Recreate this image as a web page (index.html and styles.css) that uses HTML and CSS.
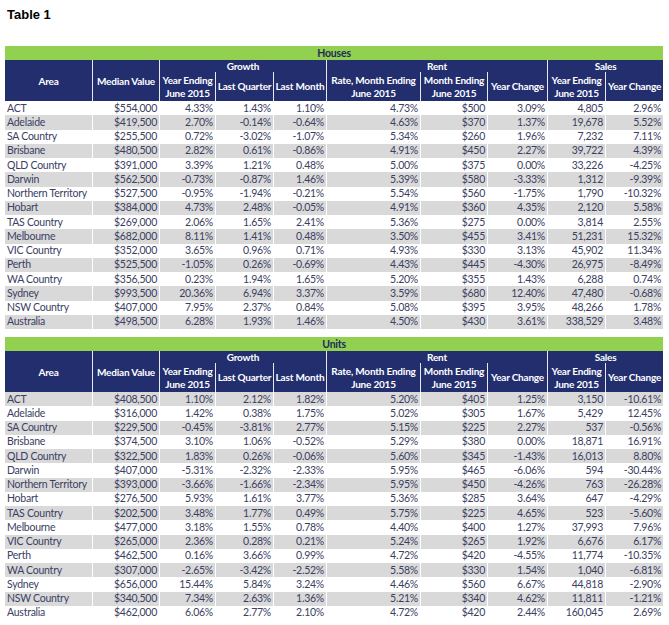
FILE: index.html
```html
<!DOCTYPE html>
<html>
<head>
<meta charset="utf-8">
<link rel="stylesheet" href="styles.css">
</head>
<body>
<h1 class="title">Table 1</h1>

<table class="grid">
  <colgroup>
    <col class="c-area"><col class="c-median"><col class="c-ye"><col class="c-lq"><col class="c-lm"><col class="c-rate"><col class="c-me"><col class="c-yc"><col class="c-sye"><col class="c-syc">
  </colgroup>
  <thead>
    <tr class="band"><th colspan="10">Houses</th></tr>
    <tr class="grp">
      <th rowspan="2" class="first">Area</th>
      <th rowspan="2">Median Value</th>
      <th colspan="3">Growth</th>
      <th colspan="3">Rent</th>
      <th colspan="2">Sales</th>
    </tr>
    <tr class="sub">
      <th>Year Ending<br>June 2015</th>
      <th>Last Quarter</th>
      <th>Last Month</th>
      <th>Rate, Month Ending<br>June 2015</th>
      <th>Month Ending<br>June 2015</th>
      <th>Year Change</th>
      <th>Year Ending<br>June 2015</th>
      <th>Year Change</th>
    </tr>
  </thead>
  <tbody>
    <tr><td>ACT</td><td>$554,000</td><td>4.33%</td><td>1.43%</td><td>1.10%</td><td>4.73%</td><td>$500</td><td>3.09%</td><td>4,805</td><td>2.96%</td></tr>
    <tr class="g"><td>Adelaide</td><td>$419,500</td><td>2.70%</td><td>-0.14%</td><td>-0.64%</td><td>4.63%</td><td>$370</td><td>1.37%</td><td>19,678</td><td>5.52%</td></tr>
    <tr><td>SA Country</td><td>$255,500</td><td>0.72%</td><td>-3.02%</td><td>-1.07%</td><td>5.34%</td><td>$260</td><td>1.96%</td><td>7,232</td><td>7.11%</td></tr>
    <tr class="g"><td>Brisbane</td><td>$480,500</td><td>2.82%</td><td>0.61%</td><td>-0.86%</td><td>4.91%</td><td>$450</td><td>2.27%</td><td>39,722</td><td>4.39%</td></tr>
    <tr><td>QLD Country</td><td>$391,000</td><td>3.39%</td><td>1.21%</td><td>0.48%</td><td>5.00%</td><td>$375</td><td>0.00%</td><td>33,226</td><td>-4.25%</td></tr>
    <tr class="g"><td>Darwin</td><td>$562,500</td><td>-0.73%</td><td>-0.87%</td><td>1.46%</td><td>5.39%</td><td>$580</td><td>-3.33%</td><td>1,312</td><td>-9.39%</td></tr>
    <tr><td>Northern Territory</td><td>$527,500</td><td>-0.95%</td><td>-1.94%</td><td>-0.21%</td><td>5.54%</td><td>$560</td><td>-1.75%</td><td>1,790</td><td>-10.32%</td></tr>
    <tr class="g"><td>Hobart</td><td>$384,000</td><td>4.73%</td><td>2.48%</td><td>-0.05%</td><td>4.91%</td><td>$360</td><td>4.35%</td><td>2,120</td><td>5.58%</td></tr>
    <tr><td>TAS Country</td><td>$269,000</td><td>2.06%</td><td>1.65%</td><td>2.41%</td><td>5.36%</td><td>$275</td><td>0.00%</td><td>3,814</td><td>2.55%</td></tr>
    <tr class="g"><td>Melbourne</td><td>$682,000</td><td>8.11%</td><td>1.41%</td><td>0.48%</td><td>3.50%</td><td>$455</td><td>3.41%</td><td>51,231</td><td>15.32%</td></tr>
    <tr><td>VIC Country</td><td>$352,000</td><td>3.65%</td><td>0.96%</td><td>0.71%</td><td>4.93%</td><td>$330</td><td>3.13%</td><td>45,902</td><td>11.34%</td></tr>
    <tr class="g"><td>Perth</td><td>$525,500</td><td>-1.05%</td><td>0.26%</td><td>-0.69%</td><td>4.43%</td><td>$445</td><td>-4.30%</td><td>26,975</td><td>-8.49%</td></tr>
    <tr><td>WA Country</td><td>$356,500</td><td>0.23%</td><td>1.94%</td><td>1.65%</td><td>5.20%</td><td>$355</td><td>1.43%</td><td>6,288</td><td>0.74%</td></tr>
    <tr class="g"><td>Sydney</td><td>$993,500</td><td>20.36%</td><td>6.94%</td><td>3.37%</td><td>3.59%</td><td>$680</td><td>12.40%</td><td>47,480</td><td>-0.68%</td></tr>
    <tr><td>NSW Country</td><td>$407,000</td><td>7.95%</td><td>2.37%</td><td>0.84%</td><td>5.08%</td><td>$395</td><td>3.95%</td><td>48,266</td><td>1.78%</td></tr>
    <tr class="g"><td>Australia</td><td>$498,500</td><td>6.28%</td><td>1.93%</td><td>1.46%</td><td>4.50%</td><td>$430</td><td>3.61%</td><td>338,529</td><td>3.48%</td></tr>
  </tbody>
</table>

<table class="grid second">
  <colgroup>
    <col class="c-area"><col class="c-median"><col class="c-ye"><col class="c-lq"><col class="c-lm"><col class="c-rate"><col class="c-me"><col class="c-yc"><col class="c-sye"><col class="c-syc">
  </colgroup>
  <thead>
    <tr class="band"><th colspan="10">Units</th></tr>
    <tr class="grp">
      <th rowspan="2" class="first">Area</th>
      <th rowspan="2">Median Value</th>
      <th colspan="3">Growth</th>
      <th colspan="3">Rent</th>
      <th colspan="2">Sales</th>
    </tr>
    <tr class="sub">
      <th>Year Ending<br>June 2015</th>
      <th>Last Quarter</th>
      <th>Last Month</th>
      <th>Rate, Month Ending<br>June 2015</th>
      <th>Month Ending<br>June 2015</th>
      <th>Year Change</th>
      <th>Year Ending<br>June 2015</th>
      <th>Year Change</th>
    </tr>
  </thead>
  <tbody>
    <tr class="g"><td>ACT</td><td>$408,500</td><td>1.10%</td><td>2.12%</td><td>1.82%</td><td>5.20%</td><td>$405</td><td>1.25%</td><td>3,150</td><td>-10.61%</td></tr>
    <tr><td>Adelaide</td><td>$316,000</td><td>1.42%</td><td>0.38%</td><td>1.75%</td><td>5.02%</td><td>$305</td><td>1.67%</td><td>5,429</td><td>12.45%</td></tr>
    <tr class="g"><td>SA Country</td><td>$229,500</td><td>-0.45%</td><td>-3.81%</td><td>2.77%</td><td>5.15%</td><td>$225</td><td>2.27%</td><td>537</td><td>-0.56%</td></tr>
    <tr><td>Brisbane</td><td>$374,500</td><td>3.10%</td><td>1.06%</td><td>-0.52%</td><td>5.29%</td><td>$380</td><td>0.00%</td><td>18,871</td><td>16.91%</td></tr>
    <tr class="g"><td>QLD Country</td><td>$322,500</td><td>1.83%</td><td>0.26%</td><td>-0.06%</td><td>5.60%</td><td>$345</td><td>-1.43%</td><td>16,013</td><td>8.80%</td></tr>
    <tr><td>Darwin</td><td>$407,000</td><td>-5.31%</td><td>-2.32%</td><td>-2.33%</td><td>5.95%</td><td>$465</td><td>-6.06%</td><td>594</td><td>-30.44%</td></tr>
    <tr class="g"><td>Northern Territory</td><td>$393,000</td><td>-3.66%</td><td>-1.66%</td><td>-2.34%</td><td>5.95%</td><td>$450</td><td>-4.26%</td><td>763</td><td>-26.28%</td></tr>
    <tr><td>Hobart</td><td>$276,500</td><td>5.93%</td><td>1.61%</td><td>3.77%</td><td>5.36%</td><td>$285</td><td>3.64%</td><td>647</td><td>-4.29%</td></tr>
    <tr class="g"><td>TAS Country</td><td>$202,500</td><td>3.48%</td><td>1.77%</td><td>0.49%</td><td>5.75%</td><td>$225</td><td>4.65%</td><td>523</td><td>-5.60%</td></tr>
    <tr><td>Melbourne</td><td>$477,000</td><td>3.18%</td><td>1.55%</td><td>0.78%</td><td>4.40%</td><td>$400</td><td>1.27%</td><td>37,993</td><td>7.96%</td></tr>
    <tr class="g"><td>VIC Country</td><td>$265,000</td><td>2.36%</td><td>0.28%</td><td>0.21%</td><td>5.24%</td><td>$265</td><td>1.92%</td><td>6,676</td><td>6.17%</td></tr>
    <tr><td>Perth</td><td>$462,500</td><td>0.16%</td><td>3.66%</td><td>0.99%</td><td>4.72%</td><td>$420</td><td>-4.55%</td><td>11,774</td><td>-10.35%</td></tr>
    <tr class="g"><td>WA Country</td><td>$307,000</td><td>-2.65%</td><td>-3.42%</td><td>-2.52%</td><td>5.58%</td><td>$330</td><td>1.54%</td><td>1,040</td><td>-6.81%</td></tr>
    <tr><td>Sydney</td><td>$656,000</td><td>15.44%</td><td>5.84%</td><td>3.24%</td><td>4.46%</td><td>$560</td><td>6.67%</td><td>44,818</td><td>-2.90%</td></tr>
    <tr class="g"><td>NSW Country</td><td>$340,500</td><td>7.34%</td><td>2.63%</td><td>1.36%</td><td>5.21%</td><td>$340</td><td>4.62%</td><td>11,811</td><td>-1.21%</td></tr>
    <tr><td>Australia</td><td>$462,000</td><td>6.06%</td><td>2.77%</td><td>2.10%</td><td>4.72%</td><td>$420</td><td>2.44%</td><td>160,045</td><td>2.69%</td></tr>
  </tbody>
</table>
</body>
</html>
```

FILE: styles.css
```css
html, body {
  margin: 0;
  padding: 0;
  background: #ffffff;
}

body {
  padding: 0 6px 0 5px;
}

.title {
  margin: 7px 0 24px 2px;
  font-family: "Liberation Sans", Arial, sans-serif;
  font-weight: bold;
  font-size: 13px;
  line-height: 15px;
  color: #000;
}

.grid {
  width: 658px;
  table-layout: fixed;
  border-collapse: separate;
  border-spacing: 0;
  font-family: Lato, "Open Sans", sans-serif;
  font-size: 10.5px;
  letter-spacing: -0.25px;
  color: #3a4062;
}

.second {
  margin-top: 8px;
}

.c-area { width: 87px; }
.c-median { width: 67px; }
.c-ye { width: 56px; }
.c-lq { width: 58px; }
.c-lm { width: 53px; }
.c-rate { width: 94px; }
.c-me { width: 67px; }
.c-yc { width: 60px; }
.c-sye { width: 58px; }
.c-syc { width: 58px; }

.band th {
  background: #92d050;
  color: #1f2a5c;
  font-weight: bold;
  font-size: 10.5px;
  letter-spacing: -0.2px;
  height: 14px;
  line-height: 14px;
  padding: 0;
  text-align: center;
}

.grp th,
.sub th {
  background: #222e6e;
  color: #ffffff;
  font-weight: bold;
  font-size: 10px;
  letter-spacing: -0.2px;
  text-align: center;
  padding: 0;
  border-left: 1px solid #e8e9f0;
  white-space: nowrap;
  overflow: hidden;
}

.grp th.first {
  border-left: none;
}

.grp th {
  height: 12px;
  line-height: 12px;
}

.sub th {
  height: 29px;
  line-height: 12.5px;
}

tbody td {
  height: 14.25px;
  line-height: 13px;
  padding: 0 2px;
  text-align: right;
  white-space: nowrap;
  border-left: 1px solid #ffffff;
}

tbody td:first-child {
  text-align: left;
  border-left: none;
}

tbody tr.g td {
  background: #d9d9d9;
}
```
